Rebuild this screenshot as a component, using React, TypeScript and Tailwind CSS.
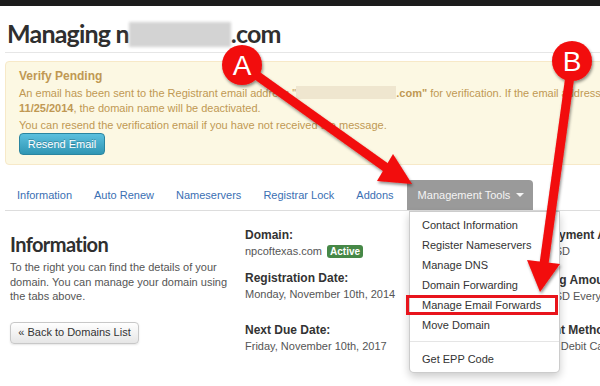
const tabs = ["Information", "Auto Renew", "Nameservers", "Registrar Lock", "Addons"];

const menu = [
  "Contact Information",
  "Register Nameservers",
  "Manage DNS",
  "Domain Forwarding",
  "Manage Email Forwards",
  "Move Domain",
];

function Arrows() {
  return (
    <svg className="pointer-events-none absolute left-0 top-0" width="600" height="386" viewBox="0 0 600 386">
      <defs>
        <filter id="sh" x="-20%" y="-20%" width="140%" height="140%">
          <feDropShadow dx="1" dy="2" stdDeviation="1.5" floodColor="#000" floodOpacity="0.45" />
        </filter>
      </defs>
      <g filter="url(#sh)" fill="#f20a0a" stroke="none">
        {/* arrow A */}
        <line x1="242" y1="65" x2="388" y2="169" stroke="#f20a0a" strokeWidth="9" />
        <polygon points="412,184 377,181 393,154" />
        <circle cx="242" cy="65" r="20" />
        {/* arrow B */}
        <line x1="572" y1="61" x2="544" y2="264" stroke="#f20a0a" strokeWidth="9" />
        <polygon points="540,292 527,260 560,264" />
        <circle cx="572" cy="61" r="20" />
      </g>
      <text x="242" y="75" textAnchor="middle" fill="#fff" fontFamily="Liberation Sans, Arial, sans-serif" fontSize="28">A</text>
      <text x="572" y="71" textAnchor="middle" fill="#fff" fontFamily="Liberation Sans, Arial, sans-serif" fontSize="28">B</text>
    </svg>
  );
}

export default function App() {
  return (
    <div className="relative h-[386px] w-[600px] overflow-hidden bg-white font-['Liberation_Sans',Arial,sans-serif] text-[11px] text-[#555]">
      <div className="h-[6px] bg-[#1c1c1c]" />

      <div className="w-[760px] pl-[5px]">
        {/* title */}
        <div className="border-b border-[#e6e6e6] pb-[3px] pt-[12px]">
          <h1 className="pl-[2px] font-['Lato',sans-serif] text-[25px] font-bold leading-[31px] tracking-[-0.8px] text-[#2f2f2f]">
            Managing n
            <span className="inline-block h-[25px] w-[102px] bg-[#d3d3d3] align-[-4px] blur-[1.5px]" />
            .com
          </h1>
        </div>

        {/* alert */}
        <div className="mt-[8px] h-[104px] whitespace-nowrap rounded-[4px] border border-[#f7e9c8] bg-[#fcf8e3] pl-[13px] pt-[7px] leading-[15px] text-[#c09853]">
          <div className="text-[12px] font-bold">Verify Pending</div>
          <div className="mt-[2px]">
            An email has been sent to the Registrant email address "
            <span className="inline-block h-[13px] w-[100px] bg-[#efe6cf] align-[-2px]" />
            <b>.com"</b> for verification. If the email address is not verified by
          </div>
          <div>
            <b>11/25/2014</b>, the domain name will be deactivated.
          </div>
          <div className="mt-[2px]">You can resend the verification email if you have not received the message.</div>
          <button className="h-[22px] w-[86px] rounded-[4px] border border-[#2a85a0] bg-gradient-to-b from-[#5bc0de] to-[#2f96b4] text-[11px] text-white [text-shadow:0_-1px_0_rgba(0,0,0,0.25)]">
            Resend Email
          </button>
        </div>

        {/* tabs */}
        <div className="mt-[15px] flex h-[31px] border-b border-[#ddd] pl-[1px]">
          {tabs.map((t) => (
            <div key={t} className="h-[30px] px-[11px] leading-[30px] text-[#3a6fb3]">
              {t}
            </div>
          ))}
          <div className="ml-[2px] flex h-[30px] items-center gap-[6px] rounded-t-[4px] bg-[#9a9a9a] pl-[11px] pr-[9px] text-[#f4f4f4]">
            Management Tools
            <span className="h-0 w-0 border-x-[4px] border-t-[4px] border-x-transparent border-t-[#f4f4f4]" />
          </div>
        </div>

        {/* content */}
        <div className="flex">
          <div className="w-[240px] pl-[5px]">
            <h2 className="mt-[21px] font-['Lato',sans-serif] text-[20px] font-bold leading-[24px] tracking-[-0.6px] text-[#2f2f2f]">
              Information
            </h2>
            <p className="mt-[4px] leading-[14.5px]">
              To the right you can find the details of your
              <br />
              domain. You can manage your domain using
              <br />
              the tabs above.
            </p>
            <button className="mt-[18px] h-[22px] w-[129px] rounded-[4px] border border-[#c8c8c8] bg-gradient-to-b from-white to-[#e6e6e6] text-[11px] text-[#333] shadow-[0_1px_2px_rgba(0,0,0,0.1)]">
              « Back to Domains List
            </button>
          </div>

          <div className="w-[265px] pt-[16px] leading-[16px]">
            <div className="text-[12px] font-bold text-[#333]">Domain:</div>
            <div className="flex items-center">
              npcoftexas.com
              <span className="ml-[5px] rounded-[3px] bg-[#468847] px-[3px] text-[10px] font-bold leading-[13px] text-white">
                Active
              </span>
            </div>
            <div className="mt-[11px] text-[12px] font-bold text-[#333]">Registration Date:</div>
            <div>Monday, November 10th, 2014</div>
            <div className="mt-[20px] text-[12px] font-bold text-[#333]">Next Due Date:</div>
            <div>Friday, November 10th, 2017</div>
          </div>

          <div className="whitespace-nowrap pt-[16px] leading-[16px]">
            <div className="ml-[5px] text-[12px] font-bold text-[#333]">First Payment Amount:</div>
            <div>$10.00 USD</div>
            <div className="mt-[13px] text-[12px] font-bold text-[#333]">Recurring Amount:</div>
            <div>$10.00 USD Every 3 Years</div>
            <div className="ml-[5px] mt-[18px] text-[12px] font-bold text-[#333]">Payment Method:</div>
            <div className="ml-[3px]">Business Debit Card</div>
          </div>
        </div>
      </div>

      {/* dropdown menu */}
      <div className="absolute left-[409px] top-[211px] w-[151px] rounded-b-[5px] border border-[rgba(0,0,0,0.2)] bg-white pb-[3px] pt-[3px] text-[#333] shadow-[0_4px_8px_rgba(0,0,0,0.2)]">
        {menu.map((m) => (
          <div key={m} className="h-[20px] pl-[12px] leading-[20px]">
            {m}
          </div>
        ))}
        <div className="mb-[7px] mt-[6px] h-px bg-[#e5e5e5]" />
        <div className="h-[20px] pl-[12px] leading-[20px]">Get EPP Code</div>
      </div>

      {/* highlight */}
      <div className="absolute left-[406px] top-[295px] h-[20px] w-[152px] border-[3px] border-[#e8141c]" />

      <Arrows />
    </div>
  );
}
